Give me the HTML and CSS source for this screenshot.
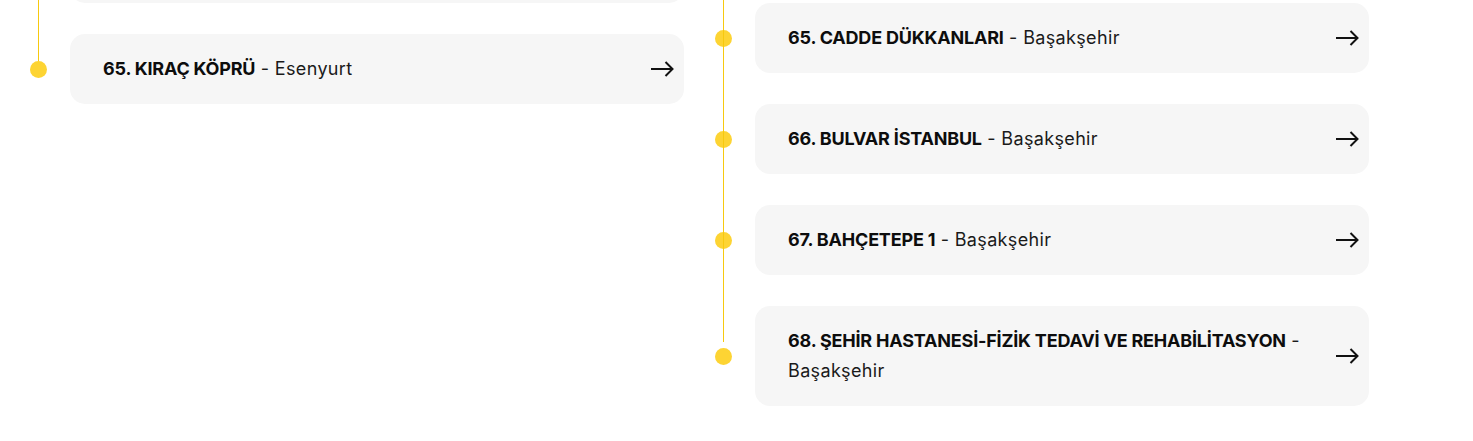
FILE: index.html
```html
<!DOCTYPE html>
<html lang="tr">
<head>
<meta charset="utf-8">
<title>Durak Listesi</title>
<link rel="stylesheet" href="styles.css">
</head>
<body>
<div class="timeline">
  <div class="col col-left">
    <div class="item">
      <span class="dot dot-hidden"></span>
      <div class="card card-empty"></div>
    </div>
    <div class="item">
      <span class="dot"></span>
      <a class="card" href="#">
        <span class="label"><strong>65. KIRAÇ KÖPRÜ</strong> - Esenyurt</span>
        <svg class="arrow" width="24" height="16" viewBox="0 0 24 16" aria-hidden="true"><path d="M1 8H22.5M15.5 1L22.5 8L15.5 15" fill="none" stroke="#111" stroke-width="2"/></svg>
      </a>
    </div>
  </div>
  <div class="col col-right">
    <div class="item">
      <span class="dot"></span>
      <a class="card" href="#">
        <span class="label"><strong>65. CADDE DÜKKANLARI</strong> - Başakşehir</span>
        <svg class="arrow" width="24" height="16" viewBox="0 0 24 16" aria-hidden="true"><path d="M1 8H22.5M15.5 1L22.5 8L15.5 15" fill="none" stroke="#111" stroke-width="2"/></svg>
      </a>
    </div>
    <div class="item">
      <span class="dot"></span>
      <a class="card" href="#">
        <span class="label"><strong>66. BULVAR İSTANBUL</strong> - Başakşehir</span>
        <svg class="arrow" width="24" height="16" viewBox="0 0 24 16" aria-hidden="true"><path d="M1 8H22.5M15.5 1L22.5 8L15.5 15" fill="none" stroke="#111" stroke-width="2"/></svg>
      </a>
    </div>
    <div class="item">
      <span class="dot"></span>
      <a class="card" href="#">
        <span class="label"><strong>67. BAHÇETEPE 1</strong> - Başakşehir</span>
        <svg class="arrow" width="24" height="16" viewBox="0 0 24 16" aria-hidden="true"><path d="M1 8H22.5M15.5 1L22.5 8L15.5 15" fill="none" stroke="#111" stroke-width="2"/></svg>
      </a>
    </div>
    <div class="item">
      <span class="dot"></span>
      <a class="card" href="#">
        <span class="label"><strong>68. ŞEHİR HASTANESİ-FİZİK TEDAVİ VE REHABİLİTASYON</strong> - Başakşehir</span>
        <svg class="arrow" width="24" height="16" viewBox="0 0 24 16" aria-hidden="true"><path d="M1 8H22.5M15.5 1L22.5 8L15.5 15" fill="none" stroke="#111" stroke-width="2"/></svg>
      </a>
    </div>
  </div>
</div>
</body>
</html>
```
FILE: styles.css
```css
html, body {
  margin: 0;
  padding: 0;
  background: #ffffff;
}

body {
  font-family: Inter, "Noto Sans", sans-serif;
  color: #111;
  overflow: hidden;
}

.timeline {
  display: grid;
  grid-template-columns: 654px 654px;
  column-gap: 31px;
  align-items: start;
  padding-left: 30px;
}

.col {
  position: relative;
  display: flex;
  flex-direction: column;
  gap: 31px;
}

.col::before {
  content: "";
  position: absolute;
  left: 8px;
  top: 0;
  width: 1px;
  background: #f7c90f;
}

.col-left {
  margin-top: -67px;
}

.col-left::before {
  bottom: 43px;
}

.col-right {
  margin-top: 3px;
}

.col-right::before {
  top: -3px;
  bottom: 64px;
}

.item {
  display: flex;
  align-items: center;
  gap: 23px;
}

.dot {
  flex: 0 0 17px;
  width: 17px;
  height: 17px;
  border-radius: 50%;
  background: #fdd433;
}

.dot-hidden {
  visibility: hidden;
}

.card {
  flex: 1;
  display: flex;
  align-items: center;
  justify-content: space-between;
  gap: 20px;
  min-height: 30px;
  padding: 20px 10px 20px 33px;
  background: #f6f6f6;
  border-radius: 15px;
  text-decoration: none;
  color: #111;
}

.card-empty {
  height: 30px;
}

.label {
  flex: 1;
  font-size: 18px;
  line-height: 30px;
  font-weight: 400;
  color: #1a1a1a;
  letter-spacing: 0.35px;
}

.label strong {
  font-weight: 700;
  color: #0d0d0d;
  letter-spacing: -0.2px;
}

.arrow {
  flex: 0 0 24px;
  display: block;
}
```
